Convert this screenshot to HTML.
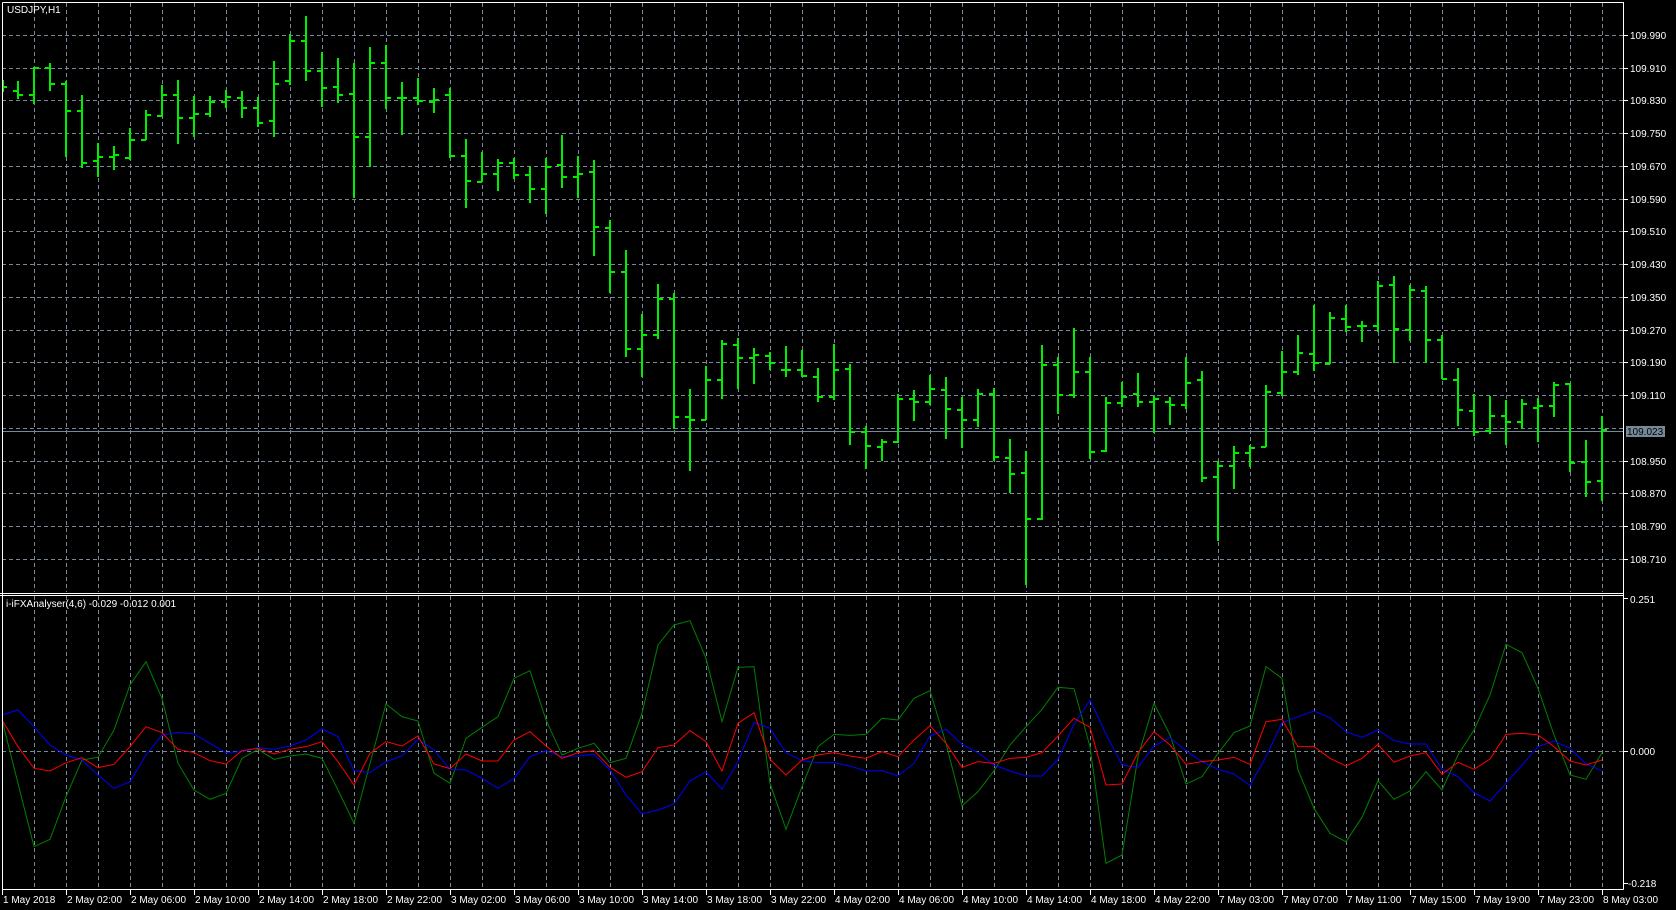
<!DOCTYPE html>
<html><head><meta charset="utf-8"><style>
html,body{margin:0;padding:0;background:#000;width:1676px;height:910px;overflow:hidden}
svg{display:block}
text{font-family:"Liberation Sans",sans-serif;font-size:10px;fill:#fff}
</style></head><body>
<svg width="1676" height="910" viewBox="0 0 1676 910" xmlns="http://www.w3.org/2000/svg">
<rect width="1676" height="910" fill="#000"/>
<g stroke="#778899" stroke-width="1" stroke-dasharray="4,3" fill="none">
<path d="M2 35.5H1623M2 68.5H1623M2 100.5H1623M2 133.5H1623M2 166.5H1623M2 199.5H1623M2 231.5H1623M2 264.5H1623M2 297.5H1623M2 330.5H1623M2 362.5H1623M2 395.5H1623M2 428.5H1623M2 461.5H1623M2 493.5H1623M2 526.5H1623M2 559.5H1623M2 751.5H1623"/>
<path d="M34.5 3V592M66.5 3V592M98.5 3V592M130.5 3V592M162.5 3V592M194.5 3V592M226.5 3V592M258.5 3V592M290.5 3V592M322.5 3V592M354.5 3V592M386.5 3V592M418.5 3V592M450.5 3V592M482.5 3V592M514.5 3V592M546.5 3V592M578.5 3V592M610.5 3V592M642.5 3V592M674.5 3V592M706.5 3V592M738.5 3V592M770.5 3V592M802.5 3V592M834.5 3V592M866.5 3V592M898.5 3V592M930.5 3V592M962.5 3V592M994.5 3V592M1026.5 3V592M1058.5 3V592M1090.5 3V592M1122.5 3V592M1154.5 3V592M1186.5 3V592M1218.5 3V592M1250.5 3V592M1282.5 3V592M1314.5 3V592M1346.5 3V592M1378.5 3V592M1410.5 3V592M1442.5 3V592M1474.5 3V592M1506.5 3V592M1538.5 3V592M1570.5 3V592M1602.5 3V592"/>
<path d="M34.5 596V889M66.5 596V889M98.5 596V889M130.5 596V889M162.5 596V889M194.5 596V889M226.5 596V889M258.5 596V889M290.5 596V889M322.5 596V889M354.5 596V889M386.5 596V889M418.5 596V889M450.5 596V889M482.5 596V889M514.5 596V889M546.5 596V889M578.5 596V889M610.5 596V889M642.5 596V889M674.5 596V889M706.5 596V889M738.5 596V889M770.5 596V889M802.5 596V889M834.5 596V889M866.5 596V889M898.5 596V889M930.5 596V889M962.5 596V889M994.5 596V889M1026.5 596V889M1058.5 596V889M1090.5 596V889M1122.5 596V889M1154.5 596V889M1186.5 596V889M1218.5 596V889M1250.5 596V889M1282.5 596V889M1314.5 596V889M1346.5 596V889M1378.5 596V889M1410.5 596V889M1442.5 596V889M1474.5 596V889M1506.5 596V889M1538.5 596V889M1570.5 596V889M1602.5 596V889"/>
</g>
<path d="M2 431.5H1623" stroke="#778899" stroke-width="1"/>
<g stroke="#00ee00" stroke-width="2" fill="none">
<path d="M3 80V92M3 87H7M18 81V99M13 91H18M18 95H23M34 67V104M29 95H34M34 68H39M50 63V91M45 68H50M50 84H55M66 81V157M61 84H66M66 111H71M82 95V168M77 111H82M82 163H87M98 143V177M93 161H98M98 157H103M114 146V170M109 157H114M114 155H119M130 128V160M125 158H130M130 140H135M146 110V140M141 140H146M146 115H151M162 85V117M157 116H162M162 95H167M178 80V144M173 95H178M178 118H183M194 96V137M189 118H194M194 114H199M210 96V117M205 114H210M210 102H215M226 90V108M221 102H226M226 97H231M242 91V118M237 98H242M242 108H247M258 97V127M253 108H258M258 123H263M274 61V137M269 121H274M274 84H279M290 34V85M285 81H290M290 41H295M306 16V81M301 41H306M306 71H311M322 52V107M317 71H322M322 88H327M338 58V103M333 87H338M338 95H343M354 63V198M349 94H354M354 137H359M370 47V167M365 137H370M370 63H375M386 45V109M381 63H386M386 98H391M402 82V135M397 98H402M402 98H407M418 78V105M413 98H418M418 101H423M434 88V113M429 102H434M434 100H439M450 88V158M445 95H450M450 156H455M466 139V208M461 156H466M466 181H471M482 152V182M477 182H482M482 174H487M498 159V191M493 174H498M498 163H503M514 158V179M509 163H514M514 175H519M530 166V203M525 175H530M530 189H535M546 158V214M541 189H546M546 167H551M562 135V188M557 165H562M562 177H567M578 156V198M573 177H578M578 174H583M594 160V256M589 172H594M594 227H599M610 220V293M605 228H610M610 272H615M626 250V357M621 272H626M626 349H631M642 314V377M637 349H642M642 335H647M658 284V339M653 335H658M658 299H663M674 293V429M669 299H674M674 417H679M690 389V471M685 417H690M690 420H695M706 366V420M701 420H706M706 380H711M722 340V399M717 380H722M722 344H727M738 338V389M733 345H738M738 358H743M754 348V384M749 358H754M754 355H759M770 352V370M765 356H770M770 363H775M786 346V377M781 370H786M786 370H791M802 350V377M797 370H802M802 376H807M818 368V402M813 377H818M818 397H823M834 344V400M829 397H834M834 370H839M850 364V445M845 369H850M850 432H855M866 426V469M861 432H866M866 446H871M882 439V461M877 447H882M882 442H887M898 394V443M893 442H898M898 399H903M914 390V421M909 399H914M914 402H919M930 375V405M925 402H930M930 389H935M946 377V439M941 390H946M946 409H951M962 397V448M957 410H962M962 420H967M978 389V427M973 420H978M978 394H983M994 388V461M989 394H994M994 457H999M1010 439V493M1005 458H1010M1010 474H1015M1026 451V585M1021 473H1026M1026 519H1031M1042 345V520M1037 519H1042M1042 365H1047M1058 357V414M1053 365H1058M1058 395H1063M1074 328V398M1069 395H1074M1074 372H1079M1090 357V459M1085 372H1090M1090 452H1095M1106 397V452M1101 451H1106M1106 403H1111M1122 382V407M1117 403H1122M1122 397H1127M1138 373V407M1133 394H1138M1138 402H1143M1154 396V433M1149 402H1154M1154 399H1159M1170 397V425M1165 402H1170M1170 405H1175M1186 357V409M1181 405H1186M1186 383H1191M1202 371V482M1197 380H1202M1202 478H1207M1218 461V541M1213 477H1218M1218 466H1223M1234 446V489M1229 466H1234M1234 453H1239M1250 445V467M1245 453H1250M1250 448H1255M1266 385V447M1261 447H1266M1266 392H1271M1282 351V396M1277 393H1282M1282 372H1287M1298 335V375M1293 372H1298M1298 353H1303M1314 305V371M1309 354H1314M1314 363H1319M1330 312V364M1325 364H1330M1330 318H1335M1346 305V332M1341 319H1346M1346 327H1351M1362 321V342M1357 326H1362M1362 326H1367M1378 281V332M1373 326H1378M1378 286H1383M1394 276V363M1389 285H1394M1394 329H1399M1410 285V341M1405 330H1410M1410 290H1415M1426 286V363M1421 291H1426M1426 340H1431M1442 335V379M1437 340H1442M1442 379H1447M1458 368V426M1453 380H1458M1458 410H1463M1474 394V436M1469 411H1474M1474 432H1479M1490 396V434M1485 431H1490M1490 416H1495M1506 400V445M1501 416H1506M1506 422H1511M1522 399V429M1517 422H1522M1522 404H1527M1538 398V442M1533 408H1538M1538 406H1543M1554 382V417M1549 406H1554M1554 385H1559M1570 383V472M1565 384H1570M1570 463H1575M1586 440V497M1581 462H1586M1586 482H1591M1602 416V501M1597 481H1602M1602 430H1607"/>
</g>
<g transform="translate(0,610) scale(1,0.33333)" fill="none" stroke-width="1">
<polyline vector-effect="non-scaling-stroke" stroke="#008000" points="2,330 18,520 34,710 50,688 66,560 82,450 98,442 114,360 130,225 146,155 162,265 178,460 194,540 210,568 226,550 242,445 258,418 274,448 290,438 306,432 322,445 338,540 354,640 370,460 386,282 402,320 418,333 434,490 450,520 466,385 482,352 498,320 514,205 530,182 546,330 562,435 578,415 594,400 610,458 626,445 642,310 658,105 674,45 690,32 706,145 722,335 738,172 754,170 770,520 786,658 802,530 818,410 834,373 850,376 866,373 882,325 898,330 914,265 930,242 946,400 962,588 978,545 994,482 1010,405 1026,350 1042,298 1058,232 1074,236 1090,410 1106,760 1122,735 1138,440 1154,280 1170,375 1186,522 1202,500 1218,430 1234,368 1250,348 1266,170 1282,205 1298,480 1314,595 1330,670 1346,695 1362,622 1378,512 1394,568 1410,543 1426,485 1442,540 1458,435 1474,360 1490,255 1506,103 1522,128 1538,235 1554,375 1570,495 1586,508 1602,428"/>
<polyline vector-effect="non-scaling-stroke" stroke="#0000ff" points="2,315 18,300 34,350 50,405 66,435 82,450 98,495 114,535 130,515 146,435 162,375 178,367 194,372 210,400 226,428 242,425 258,413 274,418 290,408 306,390 322,357 338,380 354,482 370,488 386,455 402,438 418,388 434,420 450,478 466,480 482,505 498,535 514,505 530,440 546,422 562,440 578,438 594,433 610,480 626,555 642,612 658,600 674,582 690,512 706,486 722,537 738,455 754,337 770,355 786,428 802,452 818,458 834,458 850,468 866,483 882,482 898,498 914,460 930,378 946,358 962,403 978,428 994,465 1010,483 1026,498 1042,498 1058,448 1074,343 1090,270 1106,372 1122,465 1138,472 1154,408 1170,383 1186,422 1202,455 1218,478 1234,492 1250,527 1266,440 1282,338 1298,320 1314,303 1330,323 1346,365 1362,382 1378,360 1394,392 1410,402 1426,402 1442,478 1458,500 1474,548 1490,573 1506,520 1522,465 1538,410 1554,393 1570,415 1586,462 1602,482"/>
<polyline vector-effect="non-scaling-stroke" stroke="#ff0000" points="2,330 18,410 34,475 50,483 66,458 82,443 98,473 114,463 130,410 146,350 162,368 178,418 194,428 210,452 226,462 242,422 258,415 274,432 290,418 306,410 322,395 338,455 354,525 370,430 386,395 402,408 418,378 434,462 450,476 466,432 482,453 498,453 514,390 530,365 546,408 562,445 578,428 594,422 610,472 626,502 642,485 658,413 674,405 690,362 706,395 722,483 738,340 754,308 770,448 786,495 802,450 818,435 834,428 850,438 866,445 882,425 898,440 914,390 930,347 946,400 962,472 978,455 994,460 1010,445 1026,442 1042,428 1058,378 1074,325 1090,352 1106,525 1122,522 1138,428 1154,365 1170,405 1186,463 1202,455 1218,450 1234,442 1250,463 1266,335 1282,328 1298,410 1314,410 1330,445 1346,468 1362,445 1378,403 1394,457 1410,438 1426,428 1442,493 1458,457 1474,478 1490,447 1506,373 1522,370 1538,375 1554,410 1570,453 1586,465 1602,450"/>
</g>
<g stroke="#fff" stroke-width="1" fill="none">
<path d="M2.5 2.5H1623.5V889.5M2.5 2.5V889.5H1623.5M0 593.5H1623.5M0 595.5H1623.5"/>
<path d="M1624 35.5h4M1624 68.5h4M1624 100.5h4M1624 133.5h4M1624 166.5h4M1624 199.5h4M1624 231.5h4M1624 264.5h4M1624 297.5h4M1624 330.5h4M1624 362.5h4M1624 395.5h4M1624 461.5h4M1624 493.5h4M1624 526.5h4M1624 559.5h4M1624 598.5h4M1624 751.5h4M1624 883.5h4"/>
<path d="M2.5 890V895M66.5 890V895M130.5 890V895M194.5 890V895M258.5 890V895M322.5 890V895M386.5 890V895M450.5 890V895M514.5 890V895M578.5 890V895M642.5 890V895M706.5 890V895M770.5 890V895M834.5 890V895M898.5 890V895M962.5 890V895M1026.5 890V895M1090.5 890V895M1154.5 890V895M1218.5 890V895M1282.5 890V895M1346.5 890V895M1410.5 890V895M1474.5 890V895M1538.5 890V895M1602.5 890V895"/>
</g>
<text x="7" y="13">USDJPY,H1</text>
<text x="6" y="607">i-iFXAnalyser(4,6) -0.029 -0.012 0.001</text>
<g>
<text x="1630" y="39">109.990</text><text x="1630" y="72">109.910</text><text x="1630" y="104">109.830</text><text x="1630" y="137">109.750</text><text x="1630" y="170">109.670</text><text x="1630" y="203">109.590</text><text x="1630" y="235">109.510</text><text x="1630" y="268">109.430</text><text x="1630" y="301">109.350</text><text x="1630" y="334">109.270</text><text x="1630" y="366">109.190</text><text x="1630" y="399">109.110</text><text x="1630" y="465">108.950</text><text x="1630" y="497">108.870</text><text x="1630" y="530">108.790</text><text x="1630" y="563">108.710</text>
<text x="1630" y="603">0.251</text><text x="1630" y="755">0.000</text><text x="1628" y="887">-0.218</text>
</g>
<rect x="1626" y="426" width="39" height="11" fill="#778899"/>
<text x="1627" y="435" style="fill:#000">109.023</text>
<g>
<text x="3" y="903">1 May 2018</text><text x="67" y="903">2 May 02:00</text><text x="131" y="903">2 May 06:00</text><text x="195" y="903">2 May 10:00</text><text x="259" y="903">2 May 14:00</text><text x="323" y="903">2 May 18:00</text><text x="387" y="903">2 May 22:00</text><text x="451" y="903">3 May 02:00</text><text x="515" y="903">3 May 06:00</text><text x="579" y="903">3 May 10:00</text><text x="643" y="903">3 May 14:00</text><text x="707" y="903">3 May 18:00</text><text x="771" y="903">3 May 22:00</text><text x="835" y="903">4 May 02:00</text><text x="899" y="903">4 May 06:00</text><text x="963" y="903">4 May 10:00</text><text x="1027" y="903">4 May 14:00</text><text x="1091" y="903">4 May 18:00</text><text x="1155" y="903">4 May 22:00</text><text x="1219" y="903">7 May 03:00</text><text x="1283" y="903">7 May 07:00</text><text x="1347" y="903">7 May 11:00</text><text x="1411" y="903">7 May 15:00</text><text x="1475" y="903">7 May 19:00</text><text x="1539" y="903">7 May 23:00</text><text x="1603" y="903">8 May 03:00</text>
</g>
</svg>
</body></html>
